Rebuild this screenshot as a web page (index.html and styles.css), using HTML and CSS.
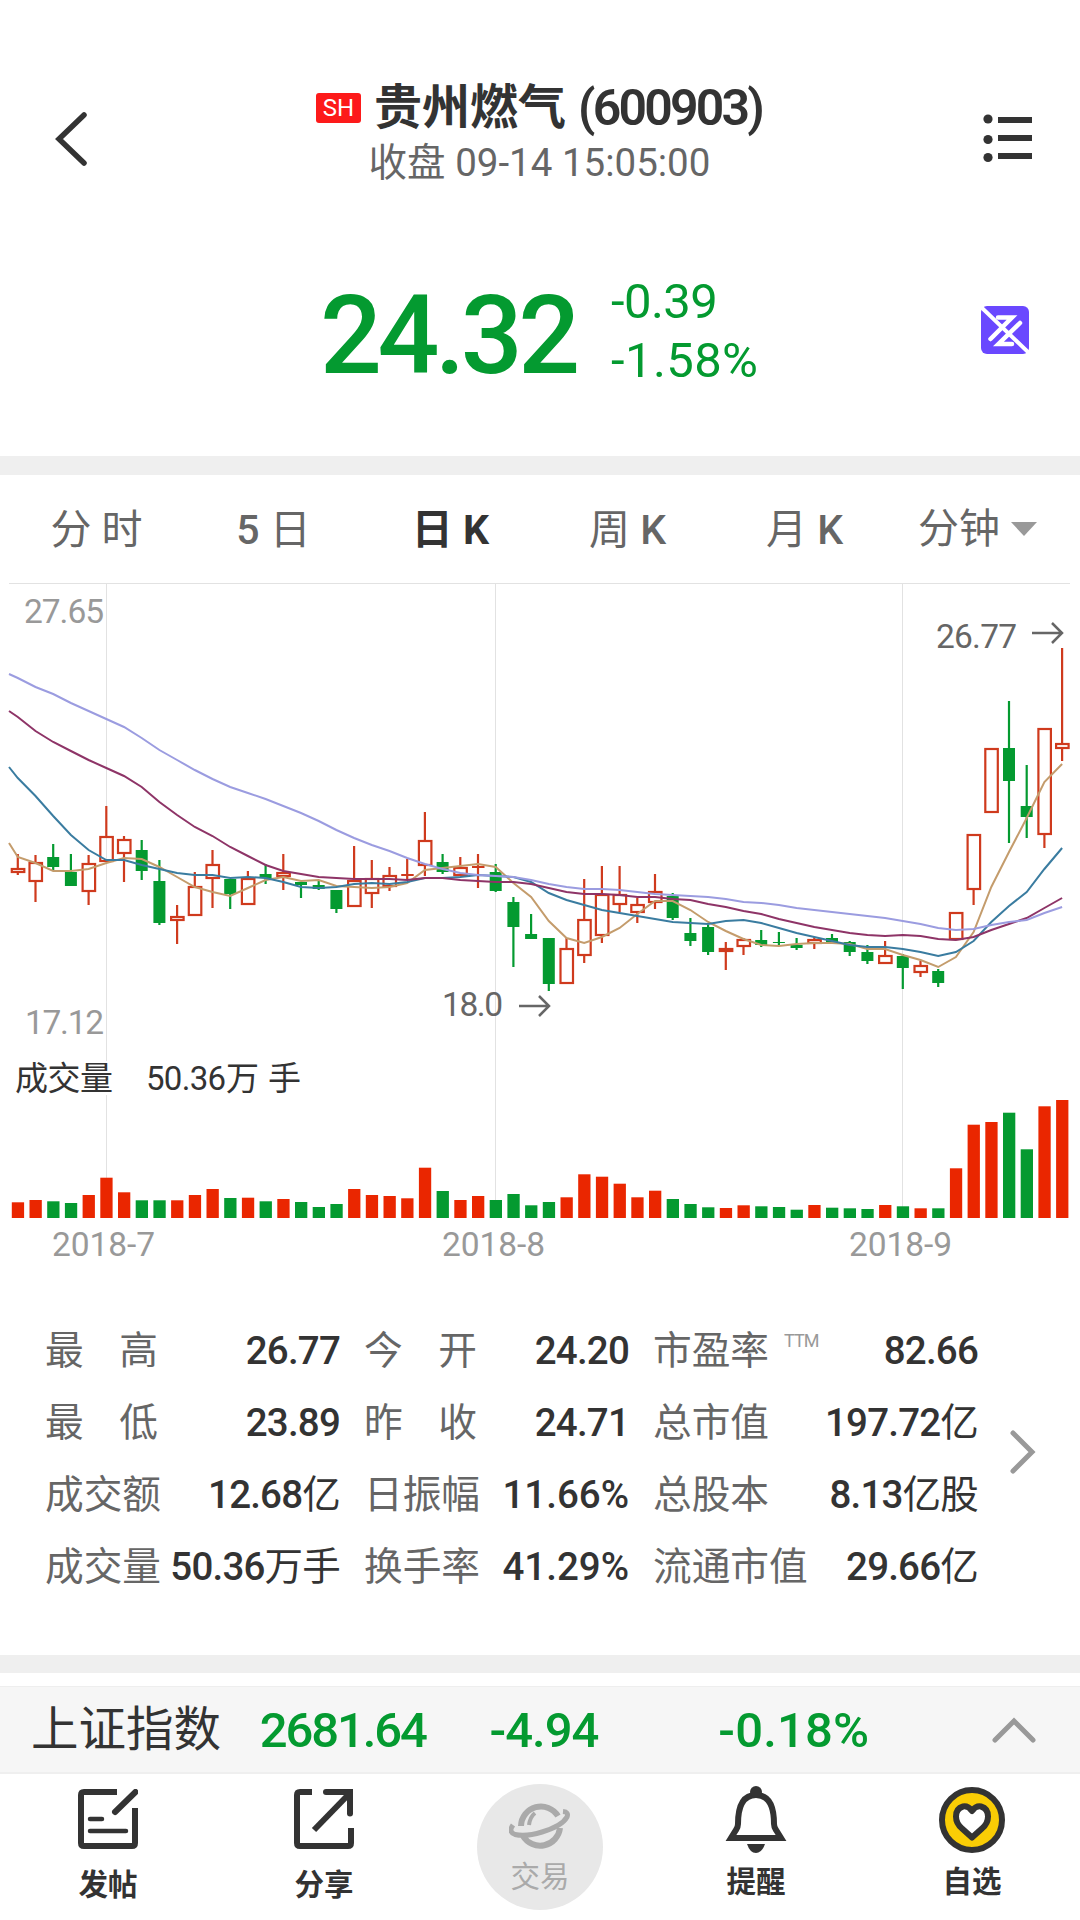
FILE: index.html
```html
<!DOCTYPE html>
<html lang="zh-CN">
<head>
    <meta charset="UTF-8">
    <meta name="viewport" content="width=device-width, initial-scale=1.0">
    <title>贵州燃气 (600903)</title>
    <link rel="stylesheet" href="styles.css">
</head>
<body>

    <header class="header">
        <svg class="back" viewBox="0 0 32 54" width="32" height="54"><path d="M29 3L4 27l25 24"/></svg>
        <div class="title-box">
            <h1 class="title"><span class="badge">SH</span><span class="name">贵州燃气</span><span class="code">(600903)</span></h1>
            <p class="subtitle">收盘 <b>09-14 15:05:00</b></p>
        </div>
        <svg class="menu" viewBox="0 0 50 50" width="50" height="50">
            <circle cx="5" cy="6" r="4.6"/><circle cx="5" cy="26.5" r="4.6"/><circle cx="5" cy="44.5" r="4.6"/>
            <path d="M15 7h34M15 25h34M15 43h34"/>
        </svg>
    </header>

    <section class="quote">
        <div class="price">24.32</div>
        <div class="change">
            <span>-0.39</span>
            <span class="rate">-1.58%</span>
        </div>
        <svg class="brand" viewBox="0 0 48 48" width="48" height="48">
            <rect width="48" height="48" rx="6" fill="#6a48ff" stroke="none"/>
            <path d="M17 11.5h14L9.500 33M39 17L17.5 38H31"/>
            <path class="slash" d="M1 2l46 44"/>
        </svg>
    </section>

    <nav class="tabs">
        <span>分 时</span>
        <span><b>5</b> 日</span>
        <span class="active">日 K</span>
        <span>周 <b>K</b></span>
        <span>月 <b>K</b></span>
        <span class="minute">分钟<i class="arrow"></i></span>
    </nav>

    <section class="chart">
        <svg id="chart" viewBox="0 0 1080 690" width="1080" height="690"></svg>
    </section>

    <section class="stats">
        <div class="stats-col">
            <div class="row"><span class="label wide">最 高</span><b>26.77</b></div>
            <div class="row"><span class="label wide">最 低</span><b>23.89</b></div>
            <div class="row"><span class="label">成交额</span><b>12.68<i>亿</i></b></div>
            <div class="row"><span class="label">成交量</span><b>50.36<i>万手</i></b></div>
        </div>
        <div class="stats-col">
            <div class="row"><span class="label wide">今 开</span><b>24.20</b></div>
            <div class="row"><span class="label wide">昨 收</span><b>24.71</b></div>
            <div class="row"><span class="label">日振幅</span><b class="percent">11.66%</b></div>
            <div class="row"><span class="label">换手率</span><b class="percent">41.29%</b></div>
        </div>
        <div class="stats-col">
            <div class="row"><span class="label">市盈率<sup>TTM</sup></span><b>82.66</b></div>
            <div class="row"><span class="label">总市值</span><b>197.72<i>亿</i></b></div>
            <div class="row"><span class="label">总股本</span><b>8.13<i>亿股</i></b></div>
            <div class="row"><span class="label">流通市值</span><b>29.66<i>亿</i></b></div>
        </div>
        <svg class="more" viewBox="0 0 26 44" width="26" height="44"><path d="M3 3l19 19L3 41"/></svg>
    </section>

    <section class="index-bar">
        <span class="index-name">上证指数</span>
        <span class="index-value">2681.64</span>
        <span class="index-diff">-4.94</span>
        <span class="index-rate">-0.18%</span>
        <svg class="up" viewBox="0 0 44 26" width="44" height="26"><path d="M3 23L22 4l19 19"/></svg>
    </section>

    <footer class="footer">
        <a class="item">
            <svg viewBox="0 0 60 60" width="60" height="60">
                <path d="M39 3H6Q3 3 3 6v48q0 3 3 3h48q3 0 3-3V19"/>
                <path class="round" d="M57.5 3L37 23"/>
                <path class="thin" d="M12 30h12M12 42h36"/>
            </svg>
            <span>发帖</span>
        </a>
        <a class="item">
            <svg viewBox="0 0 60 60" width="60" height="60">
                <path d="M18 3H6Q3 3 3 6v48q0 3 3 3h48q3 0 3-3V39"/>
                <path d="M20 41L55 5"/>
                <path d="M32 3h24v22"/>
                <circle class="cap" cx="32" cy="3" r="3"/><circle class="cap" cx="56" cy="24.5" r="3"/>
            </svg>
            <span>分享</span>
        </a>
        <a class="item">
            <span class="trade">
                <svg viewBox="0 0 62 48" width="62" height="48">
                    <path d="M12 24A20 20 0 0 1 49 14M14 34A20 20 0 0 0 51 26"/>
                    <path class="shine" d="M20 23q1-8 6-12"/>
                    <path class="ring" d="M4 23Q-1 30 6 32.5Q17 35 33 30Q53 24 58 15Q60 10 54 9.5"/>
                </svg>
                <span>交易</span>
            </span>
        </a>
        <a class="item alert">
            <svg viewBox="0 0 64 68" width="64" height="68">
                <path d="M14 38q0-29 18-29t18 29q0 3 2 6l5 8H7l5-8q2-3 2-6z"/>
                <circle class="cap" cx="32" cy="6" r="6"/>
                <path class="cap" d="M23 58h18q-3 9-9 9t-9-9z"/>
            </svg>
            <span>提醒</span>
        </a>
        <a class="item alert">
            <svg viewBox="0 0 66 68" width="66" height="68">
                <circle cx="33" cy="34" r="30" fill="#facd05"/>
                <path class="heart" d="M33 25q-4-5.5-9-4.5-7 2-7 10 0 7 6 12l10 9 10-9q6-5 6-12 0-8-7-10-5-1-9 4.5z"/>
            </svg>
            <span>自选</span>
        </a>
    </footer>

    <script src="chart.js"></script>
</body>
</html>
```
FILE: styles.css
```css
* {
    box-sizing: border-box;
    margin: 0;
    padding: 0;
}
body {
    width: 1080px;
    height: 1920px;
    overflow: hidden;
    background: #fff;
    color: #333;
    font-family: Roboto, "Noto Sans CJK SC", sans-serif;
    font-size: 39px;
}
b {
    font-weight: 500;
}
svg {
    display: block;
    flex: none;
    fill: none;
}

/* header */
.header {
    display: flex;
    justify-content: space-between;
    align-items: flex-start;
    height: 250px;
    padding: 80px 47px 0 55px;
}
.back {
    margin-top: 32px;
    stroke: #333;
    stroke-width: 5.5;
    stroke-linecap: round;
}
.menu {
    margin-top: 33px;
    fill: #333;
    stroke-width: 6;
}
.menu path {
    stroke: #333;
}
.title-box {
    text-align: center;
    padding-left: 8px;
}
.title {
    display: flex;
    align-items: center;
    justify-content: center;
    height: 56px;
    font-size: 48px;
    line-height: 56px;
}
.badge {
    width: 45px;
    height: 30px;
    margin-right: 13px;
    border-radius: 3px;
    background: #fd1a1a;
    color: #fff;
    font-size: 24px;
    font-weight: 400;
    line-height: 31px;
    text-align: center;
}
.code {
    margin-left: 12px;
    font-size: 50px;
    font-weight: 600;
    letter-spacing: -2.8px;
}
.subtitle {
    padding-left: 1px;
    color: #666;
    font-size: 38.5px;
    line-height: 53px;
}
.subtitle b {
    font-weight: 450;
    letter-spacing: 0;
}

/* price */
.quote {
    display: flex;
    height: 206px;
    padding: 22px 51px 0 320px;
    color: #049a30;
}
.price {
    width: 291px;
    padding-top: 4px;
    font-size: 109px;
    font-weight: 500;
    line-height: 120px;
    letter-spacing: -4.5px;
}
.change {
    width: 370px;
    font-size: 49px;
    font-weight: 450;
    line-height: 59px;
}
.change span {
    display: block;
    letter-spacing: -0.6px;
}
.change .rate {
    letter-spacing: 0.4px;
}
.brand {
    margin-top: 34px;
    stroke: #fff;
    stroke-width: 4.5;
    stroke-linecap: round;
}
.brand .slash {
    stroke-width: 4;
}

/* tabs */
.tabs {
    display: flex;
    height: 127px;
    padding-left: 8px;
    border-top: 19px solid #efefef;
    color: #666;
    font-size: 41px;
    line-height: 111px;
    text-align: center;
}
.tabs span {
    flex: 0 0 177px;
}
.tabs .active {
    color: #333;
    font-weight: 700;
}
.tabs .minute {
    display: flex;
    align-items: center;
    padding-left: 25px;
}
.arrow {
    margin-left: 11px;
    border: 13px solid transparent;
    border-top: 14px solid #999;
    border-bottom: 0;
}

/* chart */
.chart {
    height: 690px;
}
.chart text {
    font-size: 33.5px;
    font-weight: 450;
    fill: #999;
}
.chart .mark {
    fill: #666;
}
.chart .volume {
    font-size: 33px;
    fill: #333;
}
.chart .cn {
    font-weight: 400;
}
.chart .grid {
    stroke: #e2e2e2;
    stroke-width: 1;
}
.chart .line {
    stroke-width: 2;
}

/* stats */
.stats {
    display: grid;
    grid-template-columns: 295px 265px 325px 26px;
    column-gap: 24px;
    height: 382px;
    padding: 42px 0 0 45px;
}
.row {
    display: flex;
    justify-content: space-between;
    height: 72px;
    line-height: 72px;
    white-space: nowrap;
}
.row b {
    font-size: 38.5px;
    letter-spacing: -0.8px;
}
.row i {
    font-style: normal;
    font-weight: 400;
}
.row .percent {
    letter-spacing: 0;
}
.label {
    color: #666;
    font-size: 38.7px;
}
.label.wide {
    word-spacing: 26px;
}
.label sup {
    display: inline-block;
    margin-left: 15px;
    color: #999;
    font-size: 18px;
    line-height: 18px;
    letter-spacing: -1px;
    vertical-align: 17px;
}
.more {
    align-self: start;
    margin: 115px 0 0 8px;
    stroke: #999;
    stroke-width: 5;
    stroke-linecap: round;
}

/* index */
.index-bar {
    display: flex;
    align-items: center;
    height: 119px;
    padding: 16px 44px 0 31px;
    border-top: 18px solid #efefef;
    border-bottom: 2px solid #efefef;
    background: linear-gradient(#fff 13px, #eee 13px, #eee 14px, #f6f6f6 14px);
    color: #049a30;
    font-size: 49px;
    font-weight: 500;
    line-height: 83px;
}
.index-bar .index-name {
    width: 229px;
    color: #333;
    font-size: 47.5px;
    font-weight: 400;
}
.index-value {
    width: 230px;
    letter-spacing: -2.1px;
}
.index-diff {
    width: 229px;
    letter-spacing: -1px;
}
.index-rate {
    width: 274px;
    letter-spacing: 0.2px;
}
.up {
    margin-top: -2px;
    stroke: #999;
    stroke-width: 5;
    stroke-linecap: round;
}

/* footer */
.footer {
    display: flex;
    height: 146px;
}
.item {
    display: flex;
    flex-direction: column;
    align-items: center;
    width: 216px;
    padding-top: 15px;
    font-size: 29.5px;
    font-weight: 700;
    line-height: 40px;
}
.item svg {
    stroke: #333;
    stroke-width: 6;
}
.item > span {
    margin-top: 16px;
}
.item .round {
    stroke-linecap: round;
}
.item .thin {
    stroke-width: 4.5;
    stroke-linecap: round;
}
.item .cap {
    fill: #333;
    stroke: none;
}
.item.alert {
    padding-top: 12px;
}
.item.alert > span {
    margin-top: 8px;
}
.item .heart {
    fill: #fff;
    stroke-linejoin: round;
}
.item .trade {
    display: flex;
    flex-direction: column;
    align-items: center;
    flex: none;
    width: 126px;
    height: 126px;
    margin-top: -5px;
    padding-top: 18px;
    border-radius: 50%;
    background: #e8e8e8;
    color: #aaa;
    font-weight: 400;
}
.trade span {
    margin-top: 7px;
}
.item .trade svg {
    stroke: #aaa;
}
.item .trade .shine {
    stroke-width: 4;
}
.item .trade .ring {
    stroke-width: 5;
}
```
FILE: chart.js
```js
const svg = document.getElementById("chart");
const RED = "#cf3a1d";
const GREEN = "#049a30";
const START = 17.8;
const STEP = 17.7;

// direction, high, body top, body bottom, low, volume
const days = [
    ["r", 271, 285, 290, 292, 15.7], ["r", 272, 279, 299, 319, 18], ["g", 261, 274, 284, 287, 16.7],
    ["g", 271, 289, 303, 303, 15], ["r", 272, 280, 309, 322, 23], ["r", 223, 253, 279, 279, 40.3],
    ["r", 253, 256, 271, 299, 25.7], ["g", 257, 267, 288, 297, 17.7], ["g", 277, 298, 340, 342, 17.7],
    ["r", 322, 333, 338, 361, 17.7], ["r", 289, 303, 333, 333, 23], ["r", 267, 281, 296, 325, 29],
    ["g", 296, 296, 311, 326, 20], ["r", 288, 295, 322, 322, 20.3], ["g", 281, 291, 295, 301, 16.7],
    ["r", 271, 289, 294, 307, 19], ["g", 299, 299, 302, 315, 16], ["g", 297, 302, 306, 307, 11],
    ["g", 307, 307, 326, 330, 14], ["r", 263, 297, 324, 324, 29], ["r", 277, 295, 311, 325, 23],
    ["r", 284, 292, 304, 308, 22], ["r", 276, 291, 292, 297, 19.7], ["r", 229, 257, 283, 293, 50.3],
    ["g", 271, 279, 289, 291, 27], ["r", 274, 284, 293, 293, 18], ["r", 271, 283, 285, 305, 22],
    ["g", 281, 289, 308, 309, 18], ["g", 314, 319, 344, 384, 24], ["g", 331, 351, 356, 356, 12.7],
    ["g", 355, 355, 401, 408, 16], ["r", 355, 365, 401, 401, 20.7], ["r", 296, 336, 373, 380, 43.7],
    ["r", 283, 311, 353, 360, 41.3], ["r", 283, 311, 322, 329, 34.3], ["r", 315, 321, 330, 340, 20.7],
    ["r", 291, 308, 320, 326, 27.3], ["g", 310, 313, 335, 337, 19], ["g", 335, 350, 358, 363, 14],
    ["g", 342, 344, 369, 372, 10.7], ["r", 359, 365, 369, 387, 10], ["r", 355, 356, 364, 372, 12.7],
    ["g", 347, 357, 362, 364, 11.7], ["g", 349, 359, 360, 362, 11], ["g", 355, 362, 365, 367, 8.3],
    ["r", 354, 356, 361, 366, 13], ["g", 351, 355, 359, 359, 10.3], ["g", 358, 359, 369, 373, 9.7],
    ["g", 362, 369, 378, 381, 9], ["r", 358, 372, 381, 381, 13], ["g", 371, 373, 385, 406, 11.7],
    ["r", 378, 382, 390, 394, 9.7], ["g", 386, 388, 400, 404, 9.7], ["r", 329, 329, 357, 357, 49.7],
    ["r", 251, 251, 307, 322, 93.3], ["r", 165, 165, 230, 230, 96], ["g", 118, 165, 198, 260, 105.3],
    ["g", 182, 223, 234, 255, 68.7], ["r", 145, 145, 252, 265, 111.7], ["r", 65, 160, 166, 178, 118]
];

// moving averages, the first value is the left edge of the plot
const averages = {
    "#c49c6c": [260, 274, 280, 288, 288, 286, 280, 275, 276, 284, 294, 304, 309, 313, 305, 297, 294, 298, 297, 303, 304,
        305, 304, 300, 287, 285, 283, 281, 284, 300, 314, 338, 355, 360, 354, 345, 331, 318, 318, 327, 339,
        348, 356, 362, 363, 361, 360, 360, 361, 366, 366, 372, 377, 384, 374, 349, 304, 269, 235, 199, 181],
    "#3a7ca0": [184, 195, 213, 233, 252, 267, 277, 277, 282, 286, 290, 292, 292, 295, 294, 295, 299, 304, 305, 304, 301,
        300, 301, 299, 295, 295, 294, 292, 293, 294, 299, 310, 317, 322, 327, 330, 333, 336, 339, 340, 341,
        338, 337, 340, 345, 350, 354, 358, 362, 364, 364, 366, 369, 373, 369, 358, 339, 323, 309, 286, 265],
    "#8e3467": [128, 134, 148, 159, 168, 177, 185, 193, 204, 219, 232, 244, 253, 264, 273, 282, 288, 291, 294, 295, 296,
        296, 296, 297, 295, 295, 297, 298, 299, 299, 301, 305, 309, 311, 311, 312, 314, 314, 316, 317, 321,
        324, 328, 331, 336, 340, 344, 347, 350, 352, 353, 352, 353, 356, 357, 354, 347, 341, 335, 325, 315],
    "#9b9ce0": [91, 95, 104, 111, 120, 128, 136, 144, 155, 167, 177, 187, 196, 204, 210, 216, 223, 230, 238, 247, 255,
        262, 268, 275, 281, 286, 290, 292, 293, 294, 297, 301, 304, 306, 306, 307, 309, 311, 312, 313, 314,
        316, 319, 320, 322, 325, 327, 329, 331, 333, 335, 338, 341, 345, 347, 346, 342, 339, 337, 330, 324]
};

let out = "";

function text(x, y, width, value, cls = "") {
    out += `<text class="${cls}" x="${x}" y="${y}" textLength="${width}">${value}</text>`;
}

// grid
out += `<path class="grid" d="M9 .5H1070"/>`;
[5, 27, 50].forEach(i => {
    const x = Math.floor(START + STEP * i) + 0.5;
    out += `<path class="grid" d="M${x} 0V635"/>`;
});

days.forEach(([dir, high, top, bottom, low, volume], i) => {
    const x = START + STEP * i;
    if (dir === "g") {
        out += `<path stroke="${GREEN}" stroke-width="2.2" d="M${x} ${high}V${low}"/>`;
        out += `<rect x="${x - 6}" y="${top}" width="12" height="${bottom - top}" fill="${GREEN}"/>`;
    } else {
        const h = Math.max(bottom - top - 2, 0);
        out += `<path stroke="${RED}" stroke-width="2.2" d="M${x} ${high}V${top}M${x} ${bottom}V${low}"/>`;
        out += `<rect x="${x - 6}" y="${top + 1}" width="12.5" height="${h}" fill="none" stroke="${RED}" stroke-width="2.2"/>`;
        if (h === 0) {
            out += `<path stroke="${RED}" stroke-width="2" d="M${x - 6} ${top + 1}h12.5"/>`;
        }
    }
    out += `<rect x="${x - 6}" y="${635 - volume}" width="12.3" height="${volume}" fill="${dir === "g" ? GREEN : "#ea2600"}"/>`;
});

for (const color in averages) {
    const points = averages[color].map((y, i) => (i === 0 ? 9 : START + STEP * (i - 1)) + "," + y);
    out += `<polyline class="line" stroke="${color}" points="${points.join(" ")}"/>`;
}

// price range and marks
text(24, 40, 80, "27.65");
text(25, 451, 79, "17.12");
text(936, 65, 81, "26.77", "mark");
text(442, 433, 61, "18.0", "mark");
out += `<path stroke="#666" stroke-width="2.5" d="M1032 50h30M1052 40l10 10-10 10M519 423h30M539 413l10 10-10 10"/>`;

// volume caption
out += `<rect x="12" y="478" width="102" height="34" fill="#fff"/>`;
text(15, 507, 98, "成交量", "volume cn");
text(146, 507, 80, "50.36", "volume");
text(226, 507, 33, "万", "volume cn");
text(268, 507, 33, "手", "volume cn");

text(52, 673, 103, "2018-7");
text(442, 673, 103, "2018-8");
text(849, 673, 103, "2018-9");

svg.innerHTML = out;
```
